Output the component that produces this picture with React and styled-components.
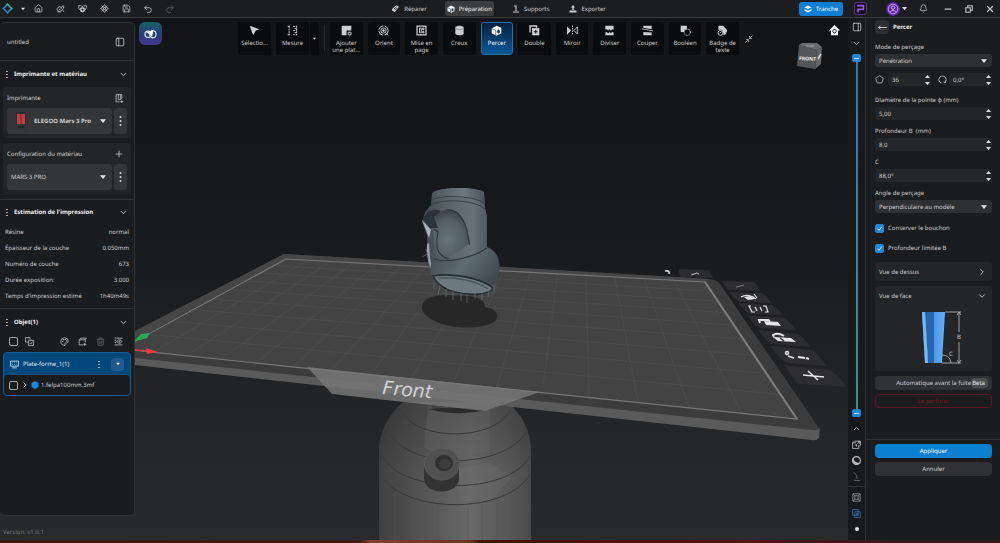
import React, { useState } from 'react';
import styled, { createGlobalStyle, css } from 'styled-components'
import { Bell, ChevronDown, ChevronRight, ChevronUp, Home, MoveLeft, Minus, Palette, PanelLeft, PanelRight, Pentagon, Plus, Redo2, Save, Trash2, Undo2, X } from 'lucide-react'

const GlobalStyle = createGlobalStyle`
  *, *::before, *::after {
    box-sizing: border-box;
  }
  body {
    margin: 0;
    background: #1a1b1d;
    color: #cfcfcf;
    font-family: 'Noto Sans', 'Open Sans', sans-serif;
    font-size: 6px;
    line-height: 10px;
    text-rendering: geometricPrecision;
  }
  button, input, select {
    font: inherit;
    color: inherit;
    margin: 0;
    padding: 0;
    border: 0;
    background: none;
    text-rendering: inherit;
  }
  button {
    cursor: pointer;
  }
  svg {
    display: block;
    flex: none;
  }
`
const Page = styled.div`
  min-height: 100vh;
  display: grid;
  grid-template-rows: 18px 1fr 3px;
`
const TopBar = styled.header`
  display: grid;
  grid-template-columns: 1fr auto 1fr;
  align-items: center;
  background: #1c1d1f;
  border-bottom: 1px solid #3a3c3e;
  padding: 0 5px 0 2px;
`
const BarGroup = styled.div`
  display: flex;
  align-items: center;
  gap: ${props => props.gap || 12}px;
  justify-content: ${props => props.end ? 'flex-end' : 'flex-start'};
`
const IconButton = styled.button`
  display: flex;
  align-items: center;
  justify-content: center;
  width: 10px;
  height: 12px;
  color: ${props => props.color || '#c4c4c4'};
`
const Tab = styled.button`
  display: flex;
  align-items: center;
  gap: 4px;
  height: 15px;
  padding: 0 2px;
  border-radius: 3px;
  white-space: nowrap;
  color: #d0d0d0;
  ${props => props.active && css`
    background: #3c3d3f;
    color: #f0f0f0;
  `}
`
const SliceButton = styled.button`
  display: flex;
  align-items: center;
  justify-content: center;
  gap: 4px;
  width: 44px;
  height: 14px;
  border-radius: 3px;
  background: #0d80d3;
  color: #fff;
`
const Account = styled.button`
  display: flex;
  align-items: center;
  gap: 2px;
  margin-left: 8px;
`
const BellButton = styled(IconButton)`
  margin-right: 4px;
`
const Work = styled.main`
  display: grid;
  grid-template-columns: 135px 1fr 18px 134px;
  background: linear-gradient(#121416 0%, #17181a 35%, #252627 80%, #292a2b 100%);
`
const Side = styled.aside`
  display: flex;
  flex-direction: column;
  padding-top: 4px;
`
const SideCard = styled.div`
  flex: 1;
  background: #1b1c1e;
  border: 1px solid #303234;
  border-left: 0;
  border-radius: 5px;
`
const Version = styled.div`
  padding: 11px 3px 3px;
  color: #77797a;
`
const Project = styled.div`
  display: flex;
  align-items: center;
  justify-content: space-between;
  height: 37px;
  padding: 0 9px 0 7px;
`
const Section = styled.section`
  border-top: 1px solid #303234;
  padding-bottom: ${props => props.bottom || 0}px;
`
const SectionHead = styled.h2`
  display: flex;
  align-items: center;
  gap: 5px;
  height: ${props => props.short ? 24 : 26}px;
  margin: 0;
  padding: 0 6px 0 5px;
  font-size: 6px;
  font-weight: 700;
  color: #f0f0f0;

  svg:last-child {
    margin-left: auto;
  }
`
const Group = styled.div`
  margin: 0 3px 5px;
  padding: 5px 4px 4px;
  border-radius: 4px;
  background: #242527;
`
const GroupHead = styled.div`
  display: flex;
  align-items: center;
  justify-content: space-between;
  height: 12px;
  margin-bottom: 4px;
  padding-right: 3px;
`
const PickRow = styled.div`
  display: flex;
  gap: 2px;
`
const MoreButton = styled.button`
  display: flex;
  align-items: center;
  justify-content: center;
  width: 13px;
  height: 26px;
  border-radius: 3px;
  background: #353638;
`
const SelectWrap = styled.span`
  position: relative;
  flex: 1;
  display: flex;
  align-items: center;
  min-width: 0;
  height: ${props => props.tall ? 26 : 13}px;
  border-radius: 3px;
  background: ${props => props.tall ? '#353638' : '#2f3032'};

  select {
    appearance: none;
    outline: none;
    width: 100%;
    height: 100%;
    padding-left: ${props => props.picture ? 27 : 4}px;
    font-weight: ${props => props.picture ? 700 : 400};
  }
  option {
    background: #353638;
  }
  svg {
    position: absolute;
    pointer-events: none;
  }
`
const Stats = styled.dl`
  margin: 0;
  padding: 0 5px;
`
const Stat = styled.div`
  display: flex;
  align-items: center;
  justify-content: space-between;
  height: 16px;

  dd {
    margin: 0;
  }
`
const ObjectTools = styled.div`
  display: flex;
  align-items: center;
  gap: 8px;
  height: 12px;
  padding: 0 11px 0 9px;

  input + button {
    margin-left: -2px;
  }
`
const Push = styled.span`
  margin-left: auto;
`
const PlateBox = styled.div`
  margin: 5px 3px 0;
  border: 1px solid #0f5f9e;
  border-radius: 4px;
  background: #00477c;
`
const PlateHead = styled.div`
  display: flex;
  align-items: center;
  gap: 4px;
  height: 22px;
  padding: 0 6px;
  color: #e4edf5;
`
const RoundButton = styled.button`
  display: flex;
  align-items: center;
  justify-content: center;
  width: 13px;
  height: 13px;
  margin-left: 6px;
  border-radius: 4px;
  background: #1f5a8e;
`
const PlateItem = styled.div`
  display: flex;
  align-items: center;
  gap: 2px;
  height: 20px;
  padding: 0 6px 0 5px;
  border-radius: 4px;
  background: #191b1d;

  input {
    margin-right: 1px;
  }
`
const Check = styled.input`
  appearance: none;
  flex: none;
  width: 9px;
  height: 9px;
  border: 1px solid #a8a8a8;
  border-radius: 2px;

  &:checked {
    border-color: #1788dd;
    background: #1788dd url("data:image/svg+xml,%3Csvg xmlns='http://www.w3.org/2000/svg' viewBox='0 0 8 8'%3E%3Cpath d='M1.5 4l2 2 3-4' fill='none' stroke='white' stroke-width='1'/%3E%3C/svg%3E") center / 7px no-repeat;
  }
`
const Stage = styled.div`
  position: relative;
  overflow: hidden;
  min-width: 0;
`
const SceneSvg = styled.svg`
  position: absolute;
  inset: 0;
  width: 100%;
  height: 100%;
`
const StageTop = styled.div`
  position: relative;
  display: grid;
  grid-template-columns: 24px 1fr 12px;
  gap: 4px;
  padding: 4px 7px 0 4px;
`
const Assistant = styled.button`
  display: flex;
  align-items: center;
  justify-content: center;
  width: 23px;
  height: 23px;
  border-radius: 6px;
  background: linear-gradient(#176062, #263e79 55%, #47338f);
`
const HomeButton = styled(IconButton)`
  height: 17px;
`
const Tools = styled.div`
  display: flex;
  justify-content: center;
  gap: 5px;
`
const Tool = styled.button`
  display: flex;
  flex-direction: column;
  align-items: center;
  width: 33px;
  height: 33px;
  padding-top: 3px;
  border-radius: 3px;
  background: #0a0b0c;
  color: #cfcfcf;
  line-height: 7px;

  span {
    margin-top: 4px;
    max-width: 31px;
  }
  ${props => props.active && css`
    background: linear-gradient(#06203a, #07599b);
    border: 1px solid #2770a8;
    padding-top: 2px;
    color: #fff;
  `}
`
const ToolPair = styled.div`
  display: flex;
  gap: 1px;
`
const ToolDrop = styled.button`
  display: flex;
  align-items: center;
  justify-content: center;
  width: 9px;
  height: 33px;
  border-radius: 3px;
  background: #0a0b0c;
`
const ToolGrid = styled.div`
  display: grid;
  grid-template-columns: repeat(11, 1fr);
  column-gap: 5px;
  width: 409px;

  ${Tool} {
    width: auto;
  }
`
const ToolLine = styled.span`
  width: 1px;
  height: 26px;
  margin-top: 3px;
  background: #2a2b2d;
`
const FoldTools = styled(IconButton)`
  align-self: center;
`
const Rail = styled.div`
  display: flex;
  flex-direction: column;
  align-items: center;
  gap: 4px;
  padding: 3px 0 5px;
  background: #17191a;
  border-right: 1px solid #2d2f31;
`
const RailLine = styled.span`
  width: 100%;
  height: 1px;
  background: #303234;
`
const LayerRange = styled.div`
  position: relative;
  flex: 1;
  width: 9px;
  margin: 1px 0;
  background: linear-gradient(#1f7fc4, #2b8aa8 45%, #2b9a86) center / 2px 100% no-repeat;

  input {
    appearance: none;
    position: absolute;
    inset: 0;
    width: 9px;
    height: 100%;
    writing-mode: vertical-lr;
    direction: rtl;
    pointer-events: none;
  }
  input::-webkit-slider-thumb {
    appearance: none;
    width: 9px;
    height: 8px;
    border-radius: 2px;
    background: linear-gradient(#b5dcf7, #b5dcf7) center / 5px 1px no-repeat #1b87d8;
    pointer-events: auto;
  }
`
const Panel = styled.aside`
  display: flex;
  flex-direction: column;
  background: #1b1c1e;
`
const PanelBody = styled.div`
  display: flex;
  flex-direction: column;
  padding: 2px 8px 22px 9px;
`
const PanelHead = styled.div`
  display: flex;
  align-items: center;
  gap: 4px;
  height: 14px;
  margin-bottom: 8px;
  font-weight: 700;
  color: #f0f0f0;
`
const BackButton = styled.button`
  display: flex;
  align-items: center;
  justify-content: center;
  width: 14px;
  height: 14px;
  border-radius: 4px;
  background: #2d2e30;
`
const Fields = styled.div`
  display: flex;
  flex-direction: column;
  gap: 6px;
  margin-bottom: 9px;
`
const Field = styled.div`
  display: flex;
  flex-direction: column;
  gap: 2px;

  ${SelectWrap} {
    flex: none;
  }
`
const SpinWrap = styled.div`
  display: flex;
  flex: 1;
  align-items: center;
  min-width: 0;
  height: 13px;
  border-radius: 3px;
  background: #242527;

  input {
    flex: 1;
    min-width: 0;
    width: 0;
    height: 13px;
    padding-left: 4px;
    outline: none;
  }
`
const SpinButtons = styled.span`
  display: flex;
  flex-direction: column;
  gap: 2px;
  width: 8px;

  button {
    display: flex;
    justify-content: center;
    height: 5px;
    align-items: center;
  }
`
const SpinRow = styled.div`
  display: grid;
  grid-template-columns: 9px 1fr 10px 1fr;
  align-items: center;
  gap: 4px;

  svg:nth-of-type(2) {
    margin-left: 3px;
  }
`
const CheckLabel = styled.label`
  display: flex;
  align-items: center;
  gap: 4px;
  height: 12px;
  margin-bottom: 8px;
`
const Fold = styled.section`
  margin-bottom: 5px;
  border-radius: 3px;
  background: #242527;
`
const FoldHead = styled.button`
  display: flex;
  align-items: center;
  justify-content: space-between;
  width: 100%;
  height: 19px;
  padding: 0 5px 0 4px;
`
const LeakActions = styled.div`
  display: flex;
  flex-direction: column;
  gap: 4px;
  padding-bottom: 9px;
`
const Wide = styled.button`
  display: flex;
  align-items: center;
  justify-content: center;
  width: 100%;
  height: 14px;
  border-radius: 4px;
  background: ${props => props.primary ? '#0b80d2' : '#303133'};
  color: ${props => props.primary ? '#fff' : '#cfcfcf'};
  ${props => props.danger && css`
    background: none;
    border: 1px solid #5c1424;
    color: #7c1524;
  `}
  ${props => props.beta && css`
    justify-content: flex-end;
    padding-right: 4px;
  `}
`
const Beta = styled.span`
  padding: 0 3px 0 1px;
  border-radius: 4px;
  background: #4b4c4e;
  color: #e8e8e8;
`
const PanelActions = styled.div`
  display: flex;
  flex-direction: column;
  gap: 4px;
  padding: 4px 8px 0 9px;
  border-top: 1px solid #303234;
`
const Footer = styled.footer`
  background: linear-gradient(90deg, #371c16, #3c1a15 36%, #7a4034 37%, #6c352a 47%, #43120f 48%, #54141a 75%, #2c1a1d 90%);
`

const Caret = ({ right = 6, size = 6 }) => (
  <svg width={size} height={size} viewBox="0 0 6 6" style={{ right }}><path d="M0 1.300h6L3 5z" fill="#e4e4e4" /></svg>
)
const Tiny = ({ up }) => (
  <svg width="5" height="3" viewBox="0 0 5 3"><path d={up ? 'M0 3L2.500 0 5 3z' : 'M0 0h5L2.500 3z'} fill="#dedede" /></svg>
)
const Dots = () => (
  <svg width="3" height="12" viewBox="0 0 3 12" fill="#d8d8d8"><circle cx="1.500" cy="2" r="1" /><circle cx="1.500" cy="6" r="1" /><circle cx="1.500" cy="10" r="1" /></svg>
)
const SmallDots = () => (
  <svg width="4" height="7" viewBox="0 0 4 7" fill="#a8a8a8"><path d="M1 0h2v1H1zM1 3h2v1H1zM1 6h2v1H1z" /></svg>
)
const Glyph = ({ size = 9, children, ...rest }) => (
  <svg width={size} height={size} viewBox="0 0 16 16" fill="none" stroke="currentColor" strokeWidth="1.400" {...rest}>{children}</svg>
)

const toolIcons = {
  select: <path d="M1 1l14 5-5 2-4 7z" fill="currentColor" stroke="none" />,
  measure: <path d="M3 1v14M1 2h4M1 14h4M9 2h5M11 5h3M9 8h5M11 11h3M9 14h5M14 1v14" strokeDasharray="3 1" />,
  plate: <><path d="M1 1h14v7H8v7H1z" fill="currentColor" stroke="none" /><path d="M10.500 10.500h4v4h-4z" /></>,
  orient: <><circle cx="8" cy="8" r="6.800" strokeDasharray="9 2" /><circle cx="8" cy="8" r="3.800" /><circle cx="8" cy="8" r="1.300" fill="currentColor" /><path d="M11 11l4 4" /></>,
  layout: <><path d="M1.500 1.500h13v13h-13z" strokeWidth="1.800" /><path d="M5 4.500h2.500v7H5zM9.500 4.500h2v2.500h-2zM9.500 9.500h2v2h-2z" /></>,
  hollow: <><path d="M2 4v8c0 4 12 4 12 0V4z" fill="currentColor" stroke="none" /><ellipse cx="8" cy="4" rx="6" ry="2.800" fill="currentColor" stroke="#777" strokeWidth="1" /></>,
  drill: <><path d="M1 5l7-4 7 3v8l-7 3.500L1 12z" fill="currentColor" stroke="none" /><ellipse cx="11" cy="9.500" rx="2" ry="3" fill="#0a3154" stroke="none" /><path d="M1 5l6 3v7" stroke="#0a3154" strokeWidth="1" /></>,
  double: <><path d="M1.500 11V1.500H11V4" strokeWidth="2" /><path d="M4.500 4.500H15V15H4.500z" fill="currentColor" stroke="none" /><path d="M9.800 7v5.500M7 9.800h5.500" stroke="#0a0b0c" /></>,
  mirror: <><path d="M0 2l6 6-6 6z" fill="currentColor" stroke="none" /><path d="M8 1v14" strokeDasharray="2 1.500" /><path d="M15 3l-5 5 5 5z" /></>,
  divide: <path d="M2 1h12v6l-2-1-2 2-2-2-2 2-2-2-2 1zM2 11l2-1 2 2 2-2 2 2 2-2 2 1v4H2z" fill="currentColor" stroke="none" />,
  cut: <path d="M2 1h12v5L2 4zM2 10l12 1v4H2zM0 6l16 3v-1L0 5z" fill="currentColor" stroke="none" />,
  bool: <><path d="M1 1h9v5c-3 0-4 1-4 4H1z" fill="currentColor" stroke="none" /><circle cx="10.500" cy="10.500" r="4.500" strokeDasharray="2 1.200" /></>,
  badge: <><path d="M2 1h7l6 7-3 6H9c1-5-2-8-7-7z" fill="currentColor" stroke="none" /><circle cx="5" cy="11.500" r="3.500" /><path d="M4 12l2-2" /></>,
}

const tools = [
  { icon: 'plate', label: 'Ajouter une plat...' },
  { icon: 'orient', label: 'Orient' },
  { icon: 'layout', label: 'Mise en page' },
  { icon: 'hollow', label: 'Creux' },
  { icon: 'drill', label: 'Percer' },
  { icon: 'double', label: 'Double' },
  { icon: 'mirror', label: 'Miroir' },
  { icon: 'divide', label: 'Diviser' },
  { icon: 'cut', label: 'Couper' },
  { icon: 'bool', label: 'Booléen' },
  { icon: 'badge', label: 'Badge de texte' },
]

const stats = [
  ['Résine', 'normal'],
  ['Épaisseur de la couche', '0.050mm'],
  ['Numéro de couche', '673'],
  ['Durée exposition:', '3.000'],
  ["Temps d'impression estimé", '1h40m49s'],
]

// corners of the printable area: back left, back right, front right, front left
const area = [[286, 259], [705, 282], [797, 419], [121, 349]]

// maps a point of the unit square onto the plate in perspective
function project(u, v) {
  const [[x0, y0], [x1, y1], [x2, y2], [x3, y3]] = area
  const dx1 = x1 - x2, dx2 = x3 - x2, dx3 = x0 - x1 + x2 - x3
  const dy1 = y1 - y2, dy2 = y3 - y2, dy3 = y0 - y1 + y2 - y3
  const det = dx1 * dy2 - dx2 * dy1
  const g = (dx3 * dy2 - dx2 * dy3) / det
  const h = (dx1 * dy3 - dx3 * dy1) / det
  const w = g * u + h * v + 1
  const x = ((x1 - x0 + g * x1) * u + (x3 - x0 + h * x3) * v + x0) / w
  const y = ((y1 - y0 + g * y1) * u + (y3 - y0 + h * y3) * v + y0) / w
  return x.toFixed(1) + ' ' + y.toFixed(1)
}

function gridPath(cols, rows) {
  let d = ''
  for (let i = 1; i < cols; i++) d += `M${project(i / cols, 0)}L${project(i / cols, 1)}`
  for (let j = 1; j < rows; j++) d += `M${project(0, j / rows)}L${project(1, j / rows)}`
  return d
}

const plateTiles = [
  'M680 269L706 270Q709 270 710 272L713 278L681 277Q677 270 680 269Z',
  'M722 281L753 282Q756 282 760 291L729 290Q726 289 722 281Z',
  'M729 292L761 293Q765 293 771 303L741 302Q736 301 729 292Z',
  'M738 303L772 305Q775 306 783 315L751 314Q746 313 738 303Z',
  'M747 315L783 318Q786 318 796 330L760 328Q756 327 747 315Z',
  'M758 330L798 334Q801 335 811 347L772 344Q768 343 758 330Z',
  'M770 346L812 350Q816 351 827 366L787 363Q783 362 770 346Z',
  'M784 365L829 370Q834 371 847 387L800 384Q796 383 784 365Z',
]

const Scene = () => (
  <SceneSvg viewBox="135 18 713 522" preserveAspectRatio="xMidYMid slice" aria-hidden="true">
    <defs>
      <linearGradient id="bottle" x1="0" x2="1">
        <stop offset="0" stopColor="#404040" />
        <stop offset=".2" stopColor="#4e4e4e" />
        <stop offset=".6" stopColor="#686868" />
        <stop offset=".85" stopColor="#585858" />
        <stop offset="1" stopColor="#4a4a4a" />
      </linearGradient>
      <linearGradient id="bottleTop" x1="0" x2="0" y1="0" y2="1">
        <stop offset="0" stopColor="#222" stopOpacity=".35" />
        <stop offset=".5" stopColor="#222" stopOpacity="0" />
      </linearGradient>
      <linearGradient id="cloth" x1="0" x2="1">
        <stop offset="0" stopColor="#3c4649" />
        <stop offset=".3" stopColor="#566265" />
        <stop offset=".65" stopColor="#667276" />
        <stop offset="1" stopColor="#3b4548" />
      </linearGradient>
      <linearGradient id="collar" x1="0" x2="1">
        <stop offset="0" stopColor="#4c575a" />
        <stop offset=".6" stopColor="#6b787c" />
        <stop offset="1" stopColor="#485356" />
      </linearGradient>
      <linearGradient id="fold" x1="0" x2="1" y1="0" y2=".5">
        <stop offset="0" stopColor="#3d484b" />
        <stop offset=".55" stopColor="#606d70" />
        <stop offset="1" stopColor="#3f4b4e" />
      </linearGradient>
      <radialGradient id="pocket" cx=".5" cy=".6" r=".6">
        <stop offset="0" stopColor="#647276" />
        <stop offset=".65" stopColor="#535f63" />
        <stop offset="1" stopColor="#374144" />
      </radialGradient>
    </defs>

    {/* bottle below the plate */}
    <path d="M379 540V450C379 432 388 416 403 402H507C522 414 531 432 531 450V540Z" fill="url(#bottle)" />
    <path d="M379 540V450C379 432 388 416 403 402H507C522 414 531 432 531 450V540Z" fill="url(#bottleTop)" />
    <path d="M428 406Q458 418 490 406V450Q455 462 424 448Z" fill="#6a6a6a" opacity=".3" />
    <path d="M428 409Q458 417 486 410Q458 406 428 409Z" fill="#2c2c2c" />
    <path d="M395 492V540M412 500V540M424 503V540M438 505V540M468 506V540M482 503V540M497 499V540M512 493V540" stroke="#555" strokeWidth="1" opacity=".5" />
    <path d="M452 470L490 462 512 478 490 500 462 502Z" fill="#707070" opacity=".25" />
    <path d="M404 414C420 441 493 441 510 411M390 434C410 468 500 471 526 433M382 455C400 494 508 497 530 456M384 479C410 514 508 514 530 474" fill="none" stroke="#393939" strokeWidth="1" />
    <path d="M424 467V478C424 496 459 496 459 478V467Z" fill="#333" />
    <ellipse cx="442" cy="464" rx="17.500" ry="16" fill="#505050" />
    <ellipse cx="442" cy="464" rx="17.500" ry="16" fill="none" stroke="#5d5d5d" strokeWidth=".8" />
    <ellipse cx="444" cy="463" rx="9" ry="8" fill="#303030" />
    <ellipse cx="445" cy="464" rx="6" ry="5.500" fill="#3d3d3d" />

    {/* plate */}
    <path d="M284 254L709 279Q718 280 720 284L819 428L819 433L135 360V331Z" fill="#3c3c3c" />
    <path d="M135 358L812 430Q819 431 820 427L819 438Q817 441 811 440L135 365Z" fill="#5a5a5a" />
    <path d="M284 254L135 331V340L286 259L705 282L709 279Z" fill="#464646" />
    <path d={`M${project(0, 0)}L${project(1, 0)}L${project(1, 1)}L${project(0, 1)}Z`} fill="#434343" />
    <path d={gridPath(16, 9)} stroke="#505050" strokeWidth=".6" fill="none" />
    <path d={`M${project(0, 0)}L${project(1, 0)}L${project(1, 1)}L${project(0, 1)}Z`} fill="none" stroke="#777" strokeWidth="1.200" />
    <path d="M705 282L797 419" stroke="#7c7c7c" strokeWidth="2" />
    <path d="M423 303C428 294 445 295 468 296C478 297 485 300 485 307C497 309 500 316 496 320C488 328 463 330 442 324C425 318 419 310 423 303Z" fill="#272727" />

    <path d="M307 367L540 392L485 411L332 394Z" fill="#777" opacity=".85" />
    <text x="382" y="394" fontSize="19" fontFamily="'DejaVu Sans', sans-serif" fontStyle="italic" fill="#d0d0d0" transform="rotate(5 382 394)">Front</text>

    {/* axes */}
    <path d="M134 341L141 334L150 333L147 338L140 340Z" fill="#24ad54" />
    <path d="M135 350L148 351" stroke="#e5393e" strokeWidth="1.500" />
    <path d="M146 348L158 352L147 354Z" fill="#ee3b40" />

    {/* buttons lying beside the plate */}
    {plateTiles.map(d => <path key={d} d={d} fill="#2d2d2f" />)}
    <g fill="none" stroke="#e4e4e4">
      <path d="M665 271Q670 270 669 274" strokeWidth="1.600" />
      <path d="M691 275L697 273L699 274" strokeWidth=".8" />
      <path d="M736 287L744 285" stroke="#777" strokeWidth="1" />
      <path d="M741 297Q748 293 756 299M754 294L757 298" strokeWidth="1.200" />
      <path d="M751 306H749L752 312H755M755 307L757 311M760 307L762 311M763 306H766L768 312H765" strokeWidth="1.200" />
      <path d="M760 323L759 320H768L770 321" strokeWidth="2" />
      <path d="M774 337L773 335Q778 332 784 336" strokeWidth="1.800" />
      <circle cx="787" cy="353" r="1.500" strokeWidth="1.500" />
      <path d="M788 356L794 358" strokeWidth="1.600" />
      <path d="M798 357L805 358M806 358L809 359" strokeWidth="2" />
      <path d="M803 375L824 377M808 371L818 380" strokeWidth="1.600" />
    </g>
    <path d="M744 297l6-1 5 3-7 1zM764 321l14 1 3 4-15-1zM773 337l18 1 5 4-18-1z" fill="#e4e4e4" />
    <path d="M780 338l4 3" stroke="#2d2d2f" strokeWidth="1.500" />

    {/* model */}
    <path d="M432 193C440 186 478 187 484 192L485 208L487 216V247C496 250 501 259 499 270L494 294C486 292 475 295 460 294C446 292 433 282 432 276L428 262L427 236L422 222L425 212L431 205Z" fill="url(#cloth)" />
    <path d="M433 193C441 186 478 187 483 193L485 204C474 196 441 195 432 203Z" fill="url(#collar)" />
    <path d="M432 200C442 194 477 196 485 204M431 205C442 198 478 200 486 210" fill="none" stroke="#343e41" strokeWidth=".9" />
    <path d="M438 213C452 204 466 211 469 243C462 250 451 258 442 259C434 254 434 244 433 231L427 224Z" fill="url(#pocket)" />
    <path d="M446 210C459 208 466 222 468 236C469 241 470 243 469 245M434 229L438 232C435 247 437 256 449 259" fill="none" stroke="#2d3739" strokeWidth="1.100" />
    <path d="M423 219C427 210 434 208 441 211L434 217L438 228L430 228Z" fill="#2b3436" />
    <path d="M422 220L431 230L429 238Z" fill="#aab5b7" />
    <path d="M427 244Q426 262 433 272L430 258L429 243Z" fill="#98a3a5" />
    <path d="M434 257C444 263 474 256 487 248C500 251 501 268 494 292C481 276 452 276 432 274C430 268 430 263 434 257Z" fill="url(#fold)" />
    <path d="M434 259C448 264 474 257 487 248" fill="none" stroke="#2d3739" strokeWidth="1.200" />
    <path d="M433 276C448 273 478 276 493 288C490 295 470 296 455 292C445 290 436 283 433 276Z" fill="#6b7a7e" stroke="#242d2f" strokeWidth="1.600" />
    <path d="M438 278C455 277 476 280 488 289" fill="none" stroke="#4a575a" strokeWidth="1.500" />
    <path d="M422 257L429 253M426 249L429 260M434 282V289M440 286L438 295M446 289V297M453 291V300M461 293V301M467 294V303M475 293V299M482 293V300M489 290L488 297M494 285V292" stroke="#707c7e" strokeWidth=".6" />

    {/* view cube */}
    <path d="M799 45L797 66L815 69L817 50Z" fill="#555657" />
    <path d="M799 45L817 50L822 47L817 43L802 43Z" fill="#6a6b6c" />
    <path d="M817 50L822 47L821 64L815 69Z" fill="#636465" />
    <path d="M806 46L814 46" stroke="#bbb" strokeWidth=".8" />
    <path d="M818 59L821 54" stroke="#ddd" strokeWidth="1.500" />
    <text x="799" y="60" fontSize="5" fontWeight="700" fill="#eee" transform="rotate(3 799 60)">FRONT</text>
  </SceneSvg>
)

const Spin = ({ id, start, label }) => {
  const [value, setValue] = useState(start)
  return (
    <SpinWrap>
      <input id={id} aria-label={label} value={value} onChange={e => setValue(e.target.value)} />
      <SpinButtons>
        <button type="button" aria-label="Augmenter"><Tiny up /></button>
        <button type="button" aria-label="Diminuer"><Tiny /></button>
      </SpinButtons>
    </SpinWrap>
  )
}

const ToolItem = ({ icon, label, active }) => (
  <Tool type="button" active={active ? 1 : undefined}>
    <Glyph size={11}>{toolIcons[icon]}</Glyph>
    <span>{label}</span>
  </Tool>
)

const Header = () => (
  <TopBar>
    <BarGroup gap={8}>
      <svg width="11" height="11" viewBox="0 0 16 16">
        <defs><linearGradient id="brand" x1="0" y1="1" x2="1" y2="0"><stop offset="0" stopColor="#2764e8" /><stop offset="1" stopColor="#35d6a0" /></linearGradient></defs>
        <path d="M8 1.500L10 4l2 2 2.500 2-2.500 2-2 2-2 2.500L6 12l-2-2-2.500-2L4 6l2-2z" fill="none" stroke="url(#brand)" strokeWidth="2" />
      </svg>
      <Caret size={4} />
      <BarGroup>
        <IconButton type="button" aria-label="Accueil"><Home size={9} /></IconButton>
        <IconButton type="button" aria-label="Modèles"><Glyph><path d="M2 8l4-3 4 1 2-3 2 1-1 4-3 4-5 1-3-2zM5 9l2 1 3-3M2 14h7M12 11l2 3M4 3l2 2" /></Glyph></IconButton>
        <IconButton type="button" aria-label="Favoris"><Glyph><path d="M4 11L1 7V3h5l2 2 2-2h5v4l-3 4" /><circle cx="8" cy="10" r="4" fill="currentColor" /><path d="M8 8v4M6 10h4" stroke="#1c1d1f" /></Glyph></IconButton>
        <IconButton type="button" aria-label="Paramètres"><Glyph><path d="M8 1l2 3-2 3-2-3zM8 9l2 3-2 3-2-3zM4 6l3 2-3 2-3-2zM12 6l3 2-3 2-3-2zM3 3l3 3M13 3l-3 3M3 13l3-3M13 13l-3-3" /></Glyph></IconButton>
        <IconButton type="button" aria-label="Enregistrer"><Save size={9} /></IconButton>
        <IconButton type="button" aria-label="Annuler l'action"><Undo2 size={10} /></IconButton>
        <IconButton type="button" aria-label="Rétablir" color="#5d5f60"><Redo2 size={10} /></IconButton>
      </BarGroup>
    </BarGroup>
    <BarGroup gap={16} as="nav">
      <Tab type="button"><Glyph><path d="M2 9l7-7 5 3-7 9-5-2z" fill="currentColor" stroke="none" /><path d="M5 9l5-4M7 11l4-4" stroke="#1c1d1f" /></Glyph>Réparer</Tab>
      <Tab type="button" active={1}><Glyph size={8}>{toolIcons.drill}</Glyph>Préparation</Tab>
      <Tab type="button"><Glyph size={8}><path d="M4 2h4v10M2 14h12" strokeWidth="2.200" /></Glyph>Supports</Tab>
      <Tab type="button"><Glyph size={8}><path d="M8 0l4 5H9.500v5h-3V5H4zM1 11h14v4H1z" fill="currentColor" stroke="none" /></Glyph>Exporter</Tab>
    </BarGroup>
    <BarGroup gap={11} end={1}>
      <SliceButton type="button"><Glyph size={8}><path d="M8 1l7 3.500-7 3.500-7-3.500zM1 8l7 3.500L15 8v3l-7 4-7-4z" fill="currentColor" stroke="none" /></Glyph>Tranche</SliceButton>
      <svg width="13" height="13" viewBox="0 0 16 16"><rect x=".5" y=".5" width="15" height="15" rx="3" fill="#150b25" stroke="#69439a" /><path d="M4 4.500h7.500v4.500H5v4" fill="none" stroke="#9a5cf5" strokeWidth="2" /></svg>
      <Account type="button" aria-label="Compte">
        <svg width="14" height="14" viewBox="0 0 16 16"><circle cx="8" cy="8" r="8" fill="#5b23a4" /><circle cx="8" cy="8" r="5.500" fill="none" stroke="#d4b5ff" /><circle cx="8" cy="6.500" r="2" fill="none" stroke="#d4b5ff" /><path d="M4.500 12c1-3 6-3 7 0" fill="none" stroke="#d4b5ff" /></svg>
        <Caret size={5} />
      </Account>
      <BellButton type="button" aria-label="Notifications"><Bell size={9} /></BellButton>
      <IconButton type="button" aria-label="Réduire"><Minus size={10} strokeWidth={3} /></IconButton>
      <IconButton type="button" aria-label="Restaurer"><Glyph size={8}><path d="M1.500 5.500h9v9h-9zM5.500 5V1.500h9v9H11" strokeWidth="2.200" /></Glyph></IconButton>
      <IconButton type="button" aria-label="Fermer"><X size={10} strokeWidth={3} /></IconButton>
    </BarGroup>
  </TopBar>
)

const Left = () => (
  <Side>
    <SideCard>
      <Project>untitled<IconButton type="button" aria-label="Panneau"><PanelLeft size={10} strokeWidth={2} /></IconButton></Project>
      <Section>
        <SectionHead><SmallDots />Imprimante et matériau<ChevronDown size={9} strokeWidth={2} /></SectionHead>
        <Group>
          <GroupHead><label htmlFor="printer">Imprimante</label><IconButton type="button" aria-label="Ajouter une imprimante"><Glyph><path d="M2 1h10v8M2 1v13h6M6 1v9h4V1M12 11v5M9.500 13.500h5" /></Glyph></IconButton></GroupHead>
          <PickRow>
            <SelectWrap tall={1} picture={1}>
              <svg width="10" height="18" viewBox="0 0 10 18" style={{ left: 9 }}><path d="M0 0h10v18H0z" fill="#292a2c" /><path d="M1 2h8v10H1z" fill="#c93a41" /><path d="M5 2v10" stroke="#7c1820" /><path d="M1 13h8v4H1z" fill="#232324" stroke="#555" strokeWidth=".5" /></svg>
              <select id="printer"><option>ELEGOO Mars 3 Pro</option></select>
              <Caret />
            </SelectWrap>
            <MoreButton type="button" aria-label="Options de l'imprimante"><Dots /></MoreButton>
          </PickRow>
        </Group>
        <Group>
          <GroupHead><label htmlFor="material">Configuration du matériau</label><IconButton type="button" aria-label="Ajouter un matériau"><Plus size={10} strokeWidth={2} /></IconButton></GroupHead>
          <PickRow>
            <SelectWrap tall={1}>
              <select id="material"><option>MARS 3 PRO</option></select>
              <Caret />
            </SelectWrap>
            <MoreButton type="button" aria-label="Options du matériau"><Dots /></MoreButton>
          </PickRow>
        </Group>
      </Section>
      <Section bottom={4}>
        <SectionHead short={1}><SmallDots />Estimation de l'impression<ChevronDown size={9} strokeWidth={2} /></SectionHead>
        <Stats>
          {stats.map(([name, value]) => <Stat key={name}><dt>{name}</dt><dd>{value}</dd></Stat>)}
        </Stats>
      </Section>
      <Section>
        <SectionHead><SmallDots />Objet(1)<ChevronDown size={9} strokeWidth={2} /></SectionHead>
        <ObjectTools>
          <Check type="checkbox" aria-label="Tout sélectionner" />
          <IconButton type="button" aria-label="Inverser la sélection"><Glyph><path d="M9 5V1H1v8h4M6 6h9v9H6z" /><path d="M8 10.500l2 2 3-4" /></Glyph></IconButton>
          <Push />
          <IconButton type="button" aria-label="Couleur"><Palette size={9} /></IconButton>
          <IconButton type="button" aria-label="Ajouter un objet"><Glyph><path d="M9 14H2V5h11v4M2 5l3-3h10l-2 3M12 10v6M9 13h6" /></Glyph></IconButton>
          <IconButton type="button" aria-label="Supprimer" color="#6a6b6c"><Trash2 size={9} /></IconButton>
          <IconButton type="button" aria-label="Visibilité"><Glyph><path d="M1 2h14M1 14h14M1 6h3M1 10h3M5 8c2-4 7-4 9 0-2 4-7 4-9 0z" /><circle cx="9.500" cy="8" r="1" /></Glyph></IconButton>
        </ObjectTools>
        <PlateBox>
          <PlateHead>
            <Glyph><path d="M1 2h14v9H1zM4 14h8M4 5h1M7.500 5h1M11 5h1M4 8h1M7.500 8h1M11 8h1" /></Glyph>
            Plate-forme_1(1)
            <Push />
            <SmallDots />
            <RoundButton type="button" aria-label="Ouvrir"><Caret size={4} /></RoundButton>
          </PlateHead>
          <PlateItem>
            <Check type="checkbox" aria-label="1.felpa100mm.3mf" />
            <ChevronRight size={8} strokeWidth={3} />
            <svg width="8" height="8" viewBox="0 0 16 16"><path d="M8 0l7 4v8l-7 4-7-4V4z" fill="#1787e0" /></svg>
            1.felpa100mm.3mf
          </PlateItem>
        </PlateBox>
      </Section>
    </SideCard>
    <Version>Version: v1.0.1</Version>
  </Side>
)

const Right = () => {
  const [keep, setKeep] = useState(true)
  const [limit, setLimit] = useState(true)

  return (
    <Panel>
      <PanelBody>
        <PanelHead><BackButton type="button" aria-label="Retour"><MoveLeft size={9} strokeWidth={2} /></BackButton>Percer</PanelHead>
        <Fields>
          <Field>
            <label htmlFor="mode">Mode de perçage</label>
            <SelectWrap><select id="mode"><option>Pénétration</option></select><Caret right={5} /></SelectWrap>
          </Field>
          <SpinRow>
            <Pentagon size={9} strokeWidth={2} />
            <Spin start="36" label="Côtés" />
            <Glyph size={9}><path d="M6 14.500A6.500 6.500 0 1 1 12.500 13M9.500 12.500l3.500 1V10" /></Glyph>
            <Spin start="0,0°" label="Rotation" />
          </SpinRow>
        </Fields>
        <Fields>
          <Field><label htmlFor="tip">Diamètre de la pointe φ (mm)</label><Spin id="tip" start="5,00" /></Field>
          <Field><label htmlFor="depth">Profondeur B &nbsp;(mm)</label><Spin id="depth" start="8,0" /></Field>
          <Field><label htmlFor="angle">C</label><Spin id="angle" start="88,0°" /></Field>
          <Field>
            <label htmlFor="direction">Angle de perçage</label>
            <SelectWrap><select id="direction"><option>Perpendiculaire au modèle</option></select><Caret right={5} /></SelectWrap>
          </Field>
        </Fields>
        <CheckLabel><Check type="checkbox" checked={keep} onChange={() => setKeep(!keep)} />Conserver le bouchon</CheckLabel>
        <CheckLabel><Check type="checkbox" checked={limit} onChange={() => setLimit(!limit)} />Profondeur limitée B</CheckLabel>
        <Fold><FoldHead type="button">Vue de dessus<ChevronRight size={10} strokeWidth={2} /></FoldHead></Fold>
        <Fold>
          <FoldHead type="button">Vue de face<ChevronDown size={10} strokeWidth={2} /></FoldHead>
          <svg width="100%" height="66" viewBox="0 0 117 66">
            <defs><linearGradient id="drillSide" x1="0" x2="1"><stop offset="0" stopColor="#5b9de2" /><stop offset=".5" stopColor="#4b97e8" /><stop offset="1" stopColor="#64b2fb" /></linearGradient></defs>
            <path d="M47 7h23l-3 51H50z" fill="url(#drillSide)" />
            <path d="M50 7h9v51h-6z" fill="#2765ad" />
            <path d="M47 7h3l3 51h-3z" fill="#75b7f2" />
            <path d="M70 7h16M67 58h19M84 7v20M84 37v21M82 10l2-3 2 3M82 55l2 3 2-3M67 50q8 0 9 8" fill="none" stroke="#bdbdbd" strokeWidth=".8" />
            <text x="82" y="34" fontSize="6" fill="#d0d0d0">B</text>
            <text x="74" y="51" fontSize="6" fill="#d0d0d0">C</text>
          </svg>
        </Fold>
        <LeakActions>
          <Wide type="button" beta={1}>Automatique avant la fuite<Beta>Beta</Beta></Wide>
          <Wide type="button" danger={1}>Le perforer</Wide>
        </LeakActions>
      </PanelBody>
      <PanelActions>
        <Wide type="button" primary={1}>Appliquer</Wide>
        <Wide type="button">Annuler</Wide>
      </PanelActions>
    </Panel>
  )
}

const App = () => (
  <Page>
    <GlobalStyle />
    <Header />
    <Work>
      <Left />
      <Stage>
        <Scene />
        <StageTop>
          <Assistant type="button" aria-label="Assistant">
            <svg width="13" height="11" viewBox="0 0 16 14"><ellipse cx="5" cy="8" rx="4" ry="4" fill="none" stroke="#dcecf5" strokeWidth="1.500" /><ellipse cx="11" cy="8" rx="4" ry="4.500" fill="none" stroke="#dcecf5" strokeWidth="1.500" /><path d="M3 6l9-4-2 9-3-3z" fill="#fff" /></svg>
          </Assistant>
          <Tools>
            <ToolItem icon="select" label="Sélectio..." />
            <ToolPair>
              <ToolItem icon="measure" label="Mesure" />
              <ToolDrop type="button" aria-label="Plus de mesures"><Caret size={3} /></ToolDrop>
            </ToolPair>
            <ToolLine />
            <ToolGrid>
              {tools.map(t => <ToolItem key={t.icon} {...t} active={t.icon === 'drill'} />)}
            </ToolGrid>
            <FoldTools type="button" aria-label="Réduire la barre"><Glyph size={8}><path d="M9 7h5M9 7V2M9 7l6-6M7 9H2M7 9v5M7 9l-6 6" /></Glyph></FoldTools>
          </Tools>
          <HomeButton type="button" aria-label="Vue d'accueil" color="#fff"><Glyph size={11}><path d="M8 0l8 8h-3v7H3V8H0z" fill="currentColor" stroke="none" /><circle cx="8" cy="9" r="2.500" stroke="#151719" /></Glyph></HomeButton>
        </StageTop>
      </Stage>
      <Rail>
        <IconButton type="button" aria-label="Vue latérale"><PanelRight size={10} strokeWidth={2} /></IconButton>
        <IconButton type="button" aria-label="Descendre"><ChevronDown size={9} strokeWidth={2} /></IconButton>
        <LayerRange>
          <input type="range" aria-label="Couche supérieure" defaultValue="100" />
          <input type="range" aria-label="Couche inférieure" defaultValue="0" />
        </LayerRange>
        <IconButton type="button" aria-label="Monter"><ChevronUp size={9} strokeWidth={2} /></IconButton>
        <IconButton type="button" aria-label="Boîte"><Glyph><path d="M12 9v6H1V5h6M1 5l3-3h11v7l-3 3M8 8l6-5M10 3h4v4M5 9h3v3" /></Glyph></IconButton>
        <IconButton type="button" aria-label="Contraste"><Glyph><circle cx="8" cy="8" r="7" strokeWidth="2" /><path d="M2 4c1 6 5 9 11 9-6 4-13-1-11-9z" fill="currentColor" /></Glyph></IconButton>
        <IconButton type="button" aria-label="Angle" color="#777"><Glyph><path d="M3 1c4 2 6 6 6 11M4 15h10" /></Glyph></IconButton>
        <RailLine />
        <IconButton type="button" aria-label="Cadre" color="#9a9a9a"><Glyph><path d="M1.500 1.500h13v13h-13zM5 5h6v6H5zM2 2l3 3M14 2l-3 3M2 14l3-3M14 14l-3-3" /></Glyph></IconButton>
        <IconButton type="button" aria-label="Calques" color="#2478c0"><Glyph><path d="M1 1h10v10H1zM5 5h10v10H5zM8 8h3v3H8z" /></Glyph></IconButton>
        <IconButton type="button" aria-label="Point" color="#e4e4e4"><svg width="4" height="4" viewBox="0 0 4 4"><circle cx="2" cy="2" r="2" fill="currentColor" /></svg></IconButton>
      </Rail>
      <Right />
    </Work>
    <Footer />
  </Page>
)

export default App;
